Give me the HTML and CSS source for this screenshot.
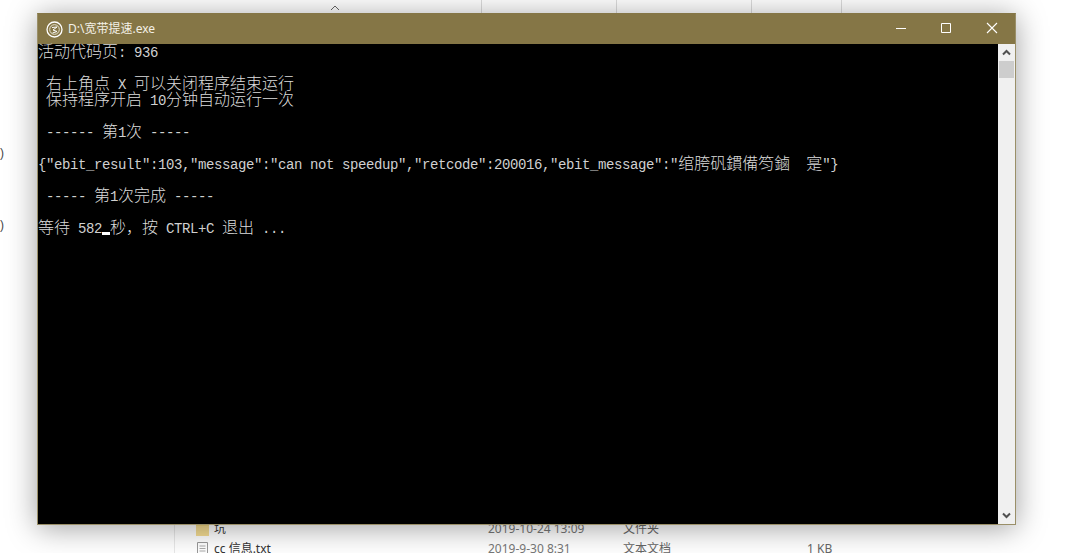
FILE: index.html
```html
<!DOCTYPE html>
<html lang="zh">
<head>
<meta charset="utf-8">
<title>D:\宽带提速.exe</title>
<link rel="stylesheet" href="styles.css">
</head>
<body>
<main class="desktop">
  <div class="explorer-top">
    <svg class="sort-caret" width="10" height="6" viewBox="0 0 10 6"><path d="M1 5 5 1l4 4" fill="none" stroke="#666" stroke-width="1"/></svg>
    <span class="col-line col-a"></span>
    <span class="col-line col-b"></span>
    <span class="col-line col-c"></span>
    <span class="col-line col-d"></span>
  </div>
  <span class="edge-mark mark-a">)</span>
  <span class="edge-mark mark-b">)</span>
  <div class="sidebar-line"></div>
  <div class="file-row row-a">
    <svg class="file-icon" width="13" height="14" viewBox="0 0 13 14"><path d="M0 1h5l1 2h7v11H0z" fill="#f0d57f"/><path d="M0 4h13v10H0z" fill="#f5dd93"/></svg>
    <span class="file-name">坑</span>
    <span class="file-date">2019-10-24 13:09</span>
    <span class="file-type">文件夹</span>
  </div>
  <div class="file-row row-b">
    <svg class="file-icon" width="13" height="16" viewBox="0 0 13 16"><path d="M1.500.5h10v15h-10z" fill="#fff" stroke="#999"/><path d="M3.500 4h6M3.500 6.500h6M3.500 9h6M3.500 11.500h6" stroke="#aaa"/></svg>
    <span class="file-name">cc 信息.txt</span>
    <span class="file-date">2019-9-30 8:31</span>
    <span class="file-type">文本文档</span>
    <span class="file-size">1 KB</span>
  </div>

  <section class="window">
    <header class="titlebar">
      <svg class="app-icon" width="17" height="17" viewBox="0 0 17 17">
        <circle cx="8.500" cy="8.500" r="7.500" fill="none" stroke="#fff" stroke-width="1.300"/>
        <circle cx="8.500" cy="8.500" r="4.800" fill="none" stroke="#e8e4d4" stroke-width="1"/>
        <path d="M6 6.500 11 6 7 9l4 1.500L6.500 12" fill="none" stroke="#fff" stroke-width="1"/>
      </svg>
      <span class="title">D:\宽带提速.exe</span>
      <div class="controls">
        <svg class="ctl" width="46" height="30" viewBox="0 0 46 30"><path d="M19 14.500h10" stroke="#fff" stroke-width="1"/></svg>
        <svg class="ctl" width="46" height="30" viewBox="0 0 46 30"><path d="M18.500 9.500h9v9h-9z" fill="none" stroke="#fff" stroke-width="1"/></svg>
        <svg class="ctl" width="46" height="30" viewBox="0 0 46 30"><path d="M18 9l10 10M28 9 18 19" stroke="#fff" stroke-width="1.100"/></svg>
      </div>
    </header>
    <div class="client">
      <div class="console">
        <div class="line"><b>活动代码页</b>: 936</div>
        <div class="line"></div>
        <div class="line"> <b>右上角点</b> X <b>可以关闭程序结束运行</b></div>
        <div class="line"> <b>保持程序开启</b> 10<b>分钟自动运行一次</b></div>
        <div class="line"></div>
        <div class="line"> ------ <b>第</b>1<b>次</b> -----</div>
        <div class="line"></div>
        <div class="line">{"ebit_result":103,"message":"can not speedup","retcode":200016,"ebit_message":"<b>绾胯矾鏆備笉鏀　寔</b>"}</div>
        <div class="line"></div>
        <div class="line"> ----- <b>第</b>1<b>次完成</b> -----</div>
        <div class="line"></div>
        <div class="line"><b>等待</b> 582<i class="cursor"> </i><b>秒，按</b> CTRL+C <b>退出</b> ...</div>
      </div>
      <div class="scrollbar">
        <svg class="arrow" width="17" height="17" viewBox="0 0 17 17"><path d="M5 10.500 8.500 7l3.500 3.500" fill="none" stroke="#505050" stroke-width="2"/></svg>
        <div class="thumb"></div>
        <div class="track"></div>
        <svg class="arrow" width="17" height="17" viewBox="0 0 17 17"><path d="M5 6.500 8.500 10 12 6.500" fill="none" stroke="#505050" stroke-width="2"/></svg>
      </div>
    </div>
  </section>
</main>
</body>
</html>
```
FILE: styles.css
```css
* { box-sizing: border-box; }
html, body { margin: 0; padding: 0; background: #fff; }
body { width: 1072px; height: 553px; overflow: hidden; }
.desktop { position: relative; width: 1072px; height: 553px; overflow: hidden; background: #fff; font-family: "Noto Sans", "Noto Sans CJK SC", sans-serif; }

.explorer-top { position: absolute; left: 0; top: 0; width: 1072px; height: 13px; }
.sort-caret { position: absolute; left: 330px; top: 5px; }
.col-line { position: absolute; top: 0; width: 1px; height: 13px; background: #dcdcdc; }
.col-a { left: 481px; }
.col-b { left: 616px; }
.col-c { left: 751px; }
.col-d { left: 841px; }
.edge-mark { position: absolute; left: 0; font: 12px/14px "Liberation Sans", sans-serif; color: #444; }
.mark-a { top: 146px; }
.mark-b { top: 218px; }
.sidebar-line { position: absolute; left: 174px; top: 524px; width: 1px; height: 29px; background: #e8e8e8; }

.file-row { position: absolute; left: 196px; height: 20px; width: 800px; font: 12px/20px "Noto Sans", "Noto Sans CJK SC", sans-serif; color: #333; }
.row-a { top: 519px; }
.row-b { top: 539px; }
.file-icon { position: absolute; left: 0; top: 3px; }
.file-name { position: absolute; left: 18px; top: 0; }
.file-date { position: absolute; left: 292px; top: 0; color: #777; }
.file-type { position: absolute; left: 427px; top: 0; color: #666; }
.file-size { position: absolute; left: 611px; top: 0; color: #666; }

.window { position: absolute; left: 37px; top: 13px; width: 979px; height: 512px; display: flex; flex-direction: column; background: #857646; border: 1px solid #9a8f68; border-top-color: #857646; box-shadow: 0 3px 28px rgba(0, 0, 0, .38); }
.titlebar { display: flex; align-items: center; height: 30px; flex: none; padding-left: 8px; color: #fff; }
.app-icon { flex: none; }
.title { margin-left: 5px; font: 12px/30px "Noto Sans", "Noto Sans CJK SC", sans-serif; color: #f4f1e6; }
.controls { display: flex; margin-left: auto; }
.ctl { display: block; }

.client { flex: 1; min-height: 0; display: flex; }
.console { flex: 1; min-width: 0; background: #000; color: #d0d0d0; font: 14px/12px "Liberation Mono", monospace; letter-spacing: -.4px; }
.line { height: 16px; white-space: pre; }
.console b { font: 300 16px/12px "Noto Sans CJK SC", sans-serif; letter-spacing: 0; color: #dcdcdc; }
.cursor { display: inline-block; position: relative; width: 8px; height: 12px; font-style: normal; vertical-align: top; letter-spacing: 0; }
.cursor::after { content: ""; position: absolute; left: 0; top: 12px; width: 8px; height: 3px; background: #fff; }

.scrollbar { width: 17px; flex: none; display: flex; flex-direction: column; background: #f0f0f0; }
.arrow { display: block; flex: none; }
.thumb { height: 17px; margin: 0 1px; background: #cdcdcd; flex: none; }
.track { flex: 1; }
```
